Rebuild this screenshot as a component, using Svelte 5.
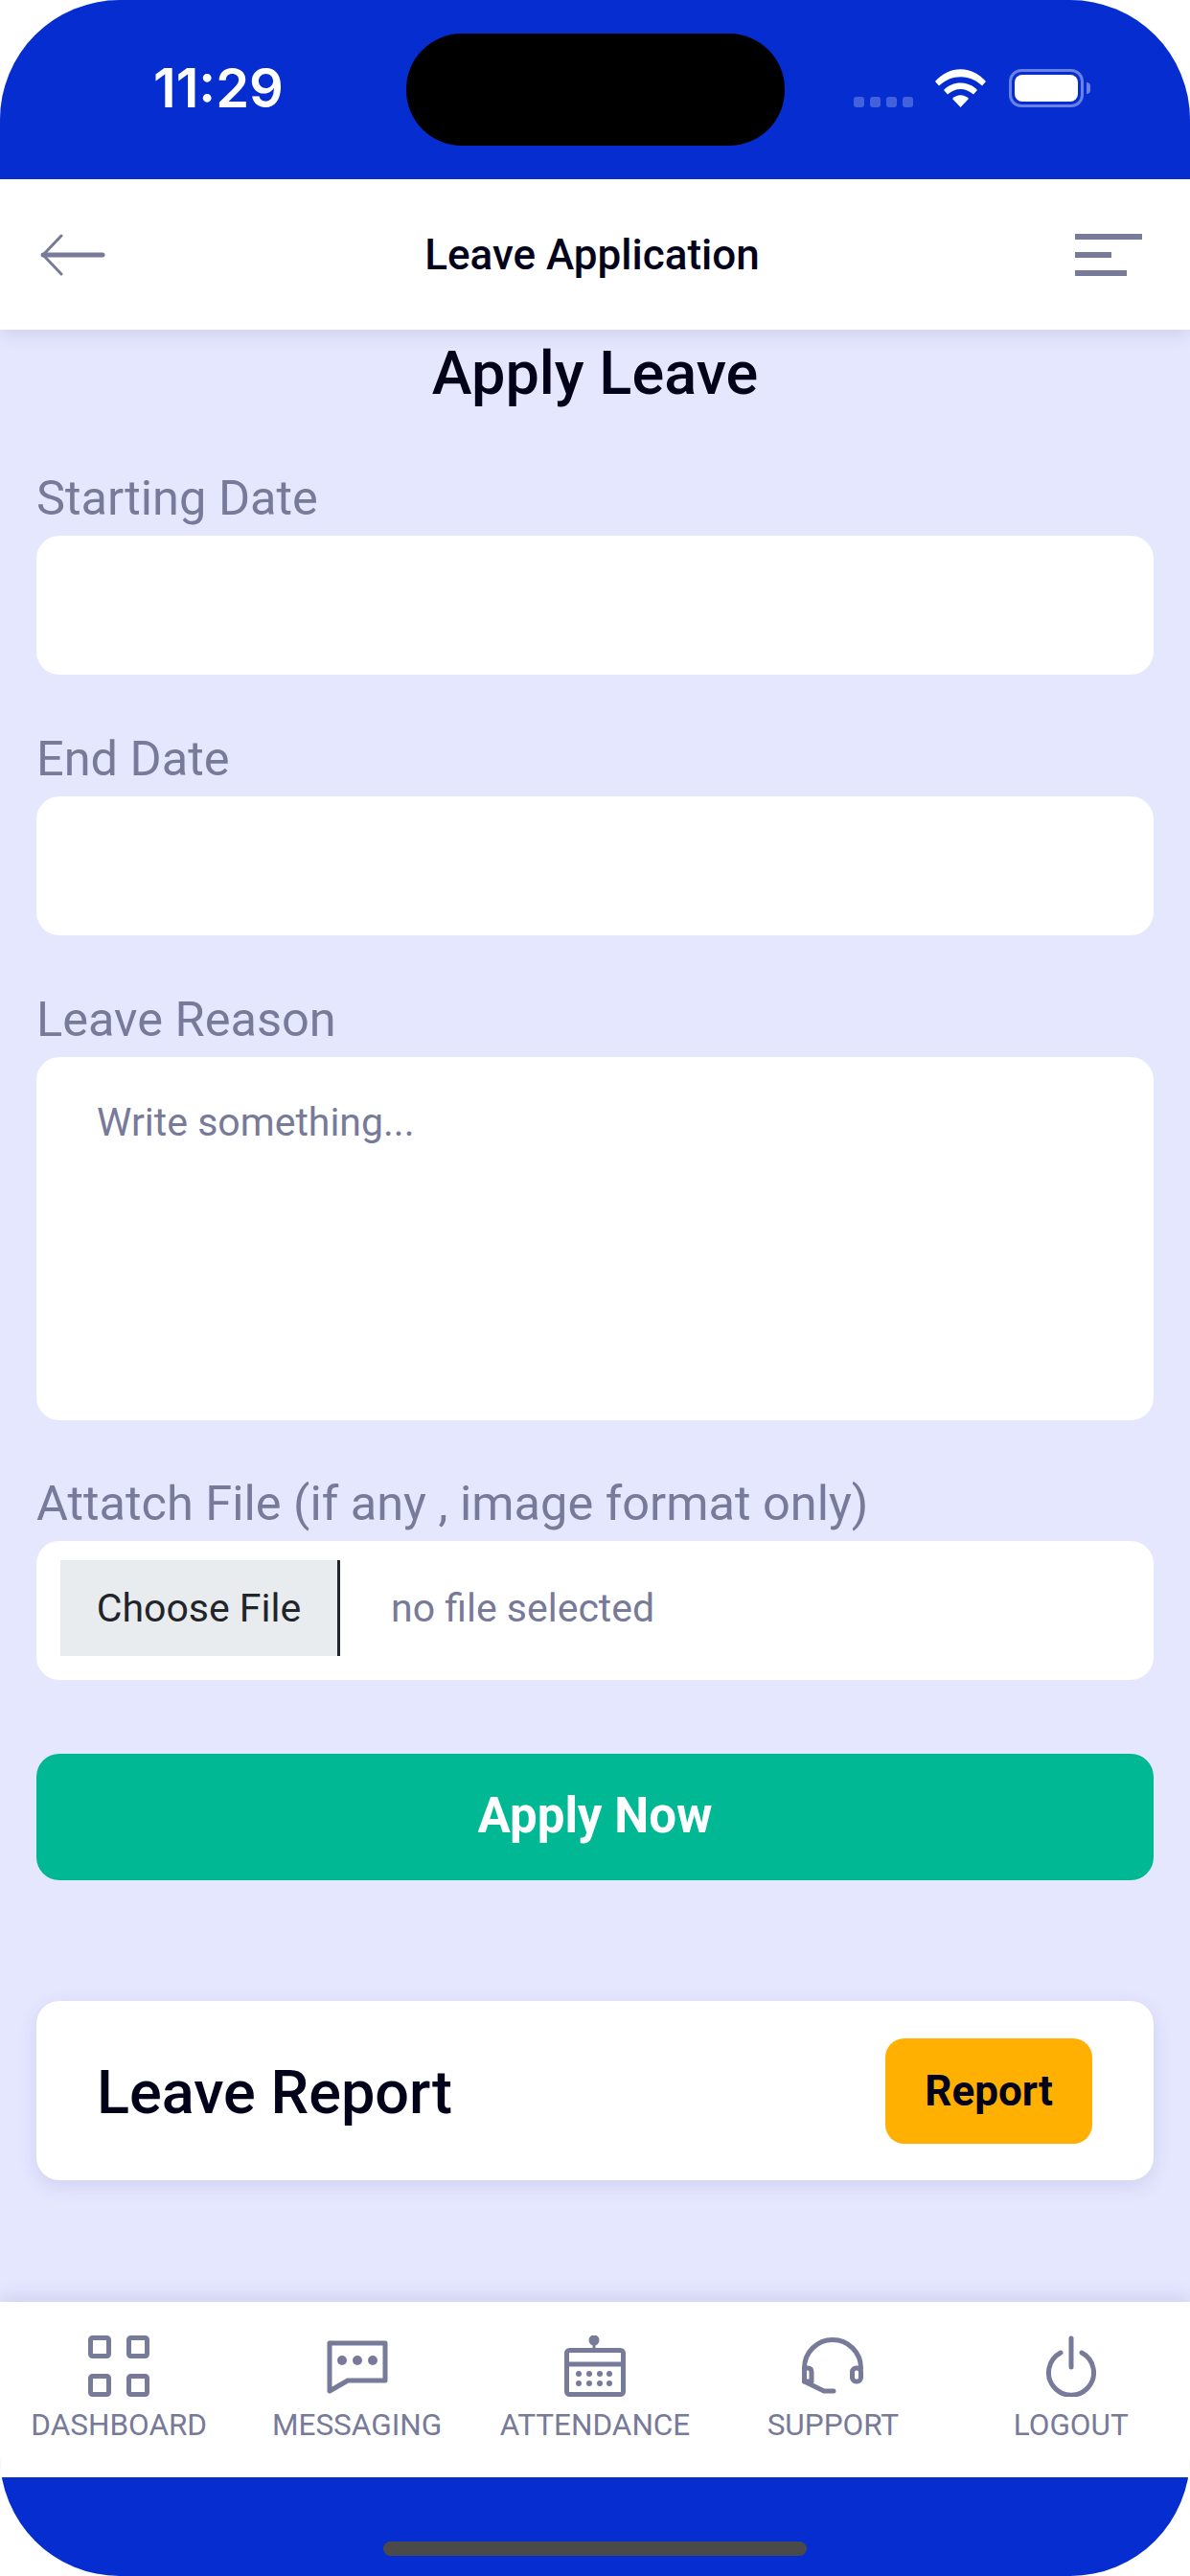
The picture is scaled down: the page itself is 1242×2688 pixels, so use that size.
<script>
	const navItems = ['DASHBOARD', 'MESSAGING', 'ATTENDANCE', 'SUPPORT', 'LOGOUT'];
	const calendarDots = [];
	for (const y of [40, 50]) {
		for (const x of [15, 26, 37, 47]) calendarDots.push({ x, y });
	}
</script>

<div class="phone">
	<div class="status">
		<span class="time">11:29</span>
		<div class="island"></div>
		<div class="signal">
			<i></i><i></i><i></i><i></i>
		</div>
		<svg class="wifi" width="53" height="40" viewBox="0 0 53 40" fill="#fff">
			<path d="M0 13 C15 -4 38 -4 53 13 L49 17.500 C36 5 17 5 4 17.500 Z" />
			<path d="M9 22 C18 12 35 12 44 22 L40 26.500 C32 19 21 19 13 26.500 Z" />
			<path d="M18 31 C23 26 30 26 35 31 L26.500 40 Z" />
		</svg>
		<div class="battery"><div class="battery-fill"></div></div>
		<div class="battery-tip"></div>
	</div>

	<header class="header">
		<svg class="back" width="68" height="44" viewBox="0 0 68 44" fill="none" stroke="#777a99" stroke-linecap="round" stroke-linejoin="round">
			<path d="M22 2 L3 22 L22 42" stroke-width="3" />
			<path d="M3 22 H65" stroke-width="5" />
		</svg>
		<h1>Leave Application</h1>
		<div class="menu">
			<span class="bar-a"></span>
			<span class="bar-b"></span>
			<span class="bar-c"></span>
		</div>
	</header>

	<main class="content">
		<h2>Apply Leave</h2>
		<label for="start">Starting Date</label>
		<input id="start" class="field" type="text" />
		<label for="end">End Date</label>
		<input id="end" class="field" type="text" />
		<label for="reason">Leave Reason</label>
		<textarea id="reason" class="area" placeholder="Write something..."></textarea>
		<label for="file">Attatch File (if any , image format only)</label>
		<div class="file">
			<button id="file" class="choose">Choose File</button>
			<span class="file-name">no file selected</span>
		</div>
		<button class="apply">Apply Now</button>
		<section class="report">
			<h3>Leave Report</h3>
			<button class="report-btn">Report</button>
		</section>
	</main>

	<nav class="nav">
		{#each navItems as item}
			<div class="nav-item">
				<div class="nav-icon">
					{#if item === 'DASHBOARD'}
						<svg width="64" height="64" viewBox="0 0 64 64" fill="none" stroke="#777a99" stroke-width="5">
							<rect x="2.500" y="2.500" width="19" height="19" rx="2" />
							<rect x="42.500" y="2.500" width="19" height="19" rx="2" />
							<rect x="2.500" y="42.500" width="19" height="19" rx="2" />
							<rect x="42.500" y="42.500" width="19" height="19" rx="2" />
						</svg>
					{:else if item === 'MESSAGING'}
						<svg width="64" height="64" viewBox="0 0 64 64" fill="none" stroke="#777a99" stroke-width="5" stroke-linejoin="round">
							<path d="M3 8 H61 V47 H22 L3 58 Z" />
							<circle cx="16" cy="26" r="5" fill="#777a99" stroke="none" />
							<circle cx="32" cy="26" r="5" fill="#777a99" stroke="none" />
							<circle cx="48" cy="26" r="5" fill="#777a99" stroke="none" />
						</svg>
					{:else if item === 'ATTENDANCE'}
						<svg width="64" height="64" viewBox="0 0 64 64" fill="none" stroke="#777a99" stroke-width="5" stroke-linejoin="round">
							<rect x="2.500" y="15.500" width="59" height="46" rx="3" />
							<path d="M2.500 30 H61.500" />
							<path d="M31 5 V15" stroke-width="3" />
							<circle cx="31" cy="5" r="5.500" fill="#777a99" stroke="none" />
							{#each calendarDots as dot}
								<circle cx={dot.x} cy={dot.y} r="3" fill="#777a99" stroke="none" />
							{/each}
						</svg>
					{:else if item === 'SUPPORT'}
						<svg width="64" height="64" viewBox="0 0 64 64" fill="none" stroke="#777a99" stroke-width="5" stroke-linecap="round" stroke-linejoin="round">
							<path d="M2.500 34 A29.500 29.500 0 0 1 61.500 34" />
							<path d="M2.500 34 V48 L23 58 H33" />
							<path d="M2.500 34 H6 Q10 34 10 38 V48 H2.500" />
							<rect x="52.500" y="34" width="9" height="14" rx="4" />
						</svg>
					{:else}
						<svg width="52" height="64" viewBox="0 0 52 64" fill="none" stroke="#777a99" stroke-width="5" stroke-linecap="round">
							<path d="M26 3 V33" />
							<path d="M15 18 A23.500 23.500 0 1 0 37 18" />
						</svg>
					{/if}
				</div>
				<span class="nav-label">{item}</span>
			</div>
		{/each}
	</nav>

	<div class="home-bar">
		<div class="indicator"></div>
	</div>
</div>

<style>
	:global(body) {
		margin: 0;
		background: #fff;
	}

	.phone {
		width: 1242px;
		height: 2688px;
		display: flex;
		flex-direction: column;
		overflow: hidden;
		border-radius: 125px;
		background: #e5e7ff;
		font-family: Roboto, 'Liberation Sans', sans-serif;
		color: #777a99;
	}

	.status {
		position: relative;
		height: 187px;
		flex: none;
		background: #052dd0;
		z-index: 3;
	}

	.time {
		position: absolute;
		left: 160px;
		top: 60px;
		font-family: Inter, sans-serif;
		font-size: 56px;
		line-height: 64px;
		font-weight: 600;
		color: #fff;
	}

	.island {
		position: absolute;
		left: 424px;
		top: 35px;
		width: 395px;
		height: 117px;
		border-radius: 58px;
		background: #000;
	}

	.signal {
		position: absolute;
		left: 891px;
		top: 101px;
		display: flex;
		gap: 6px;
	}

	.signal i {
		width: 11px;
		height: 11px;
		border-radius: 3px;
		background: rgba(255, 255, 255, 0.25);
	}

	.wifi {
		position: absolute;
		left: 976px;
		top: 72px;
	}

	.battery {
		position: absolute;
		left: 1053px;
		top: 72px;
		width: 78px;
		height: 40px;
		box-sizing: border-box;
		padding: 3px;
		border: 3px solid rgba(255, 255, 255, 0.4);
		border-radius: 13px;
	}

	.battery-fill {
		width: 100%;
		height: 100%;
		border-radius: 8px;
		background: #fff;
	}

	.battery-tip {
		position: absolute;
		left: 1134px;
		top: 86px;
		width: 4px;
		height: 12px;
		border-radius: 0 6px 6px 0;
		background: rgba(255, 255, 255, 0.4);
	}

	.header {
		position: relative;
		z-index: 2;
		height: 157px;
		flex: none;
		display: flex;
		align-items: center;
		justify-content: space-between;
		padding: 0 50px 0 42px;
		background: #fff;
		box-shadow: 0 4px 18px rgba(60, 60, 120, 0.14);
	}

	.header h1 {
		position: absolute;
		left: 0;
		right: 6px;
		margin: 0;
		text-align: center;
		font-size: 44px;
		font-weight: 500;
		color: #02021a;
	}

	.menu {
		width: 70px;
		display: flex;
		flex-direction: column;
		gap: 13px;
	}

	.menu span {
		height: 6px;
		background: #777a99;
	}

	.bar-b {
		width: 38px;
	}

	.bar-c {
		width: 54px;
	}

	.content {
		flex: 1;
		display: flex;
		flex-direction: column;
		padding: 10px 38px 0;
	}

	h2 {
		margin: 0 0 64px;
		text-align: center;
		font-size: 63px;
		line-height: 72px;
		font-weight: 500;
		color: #02021a;
	}

	label {
		font-size: 50.500px;
		line-height: 60px;
		margin-bottom: 9px;
	}

	.field,
	.area {
		display: block;
		flex: none;
		box-sizing: border-box;
		width: 100%;
		border: none;
		border-radius: 24px;
		background: #fff;
		font-family: inherit;
		outline: none;
	}

	.field {
		height: 145px;
		margin-bottom: 58px;
	}

	.area {
		height: 379px;
		margin-bottom: 57px;
		padding: 44px 63px;
		font-size: 41px;
		line-height: 48px;
		resize: none;
	}

	.area::placeholder {
		color: #777a99;
		opacity: 1;
	}

	.file {
		height: 145px;
		flex: none;
		box-sizing: border-box;
		display: flex;
		align-items: center;
		padding: 0 0 6px 25px;
		border-radius: 24px;
		background: #fff;
	}

	.choose {
		width: 292px;
		height: 100px;
		border: none;
		border-right: 3px solid #212529;
		background: #e9ecef;
		color: #212529;
		font-family: inherit;
		font-size: 41px;
	}

	.file-name {
		margin-left: 53px;
		font-size: 41px;
	}

	.apply {
		flex: none;
		height: 132px;
		margin-top: 77px;
		padding-bottom: 4px;
		border: none;
		border-radius: 24px;
		background: #00b894;
		color: #fff;
		font-family: inherit;
		font-size: 51px;
		font-weight: 700;
	}

	.report {
		flex: none;
		height: 187px;
		box-sizing: border-box;
		margin-top: 126px;
		padding: 0 64px 0 63px;
		display: flex;
		align-items: center;
		justify-content: space-between;
		border-radius: 24px;
		background: #fff;
		box-shadow: 0 6px 20px rgba(60, 60, 120, 0.12);
	}

	.report h3 {
		margin: 3px 0 0;
		font-size: 63px;
		font-weight: 500;
		color: #02021a;
	}

	.report-btn {
		width: 216px;
		height: 110px;
		border: none;
		border-radius: 20px;
		background: #ffb000;
		color: #02021a;
		font-family: inherit;
		font-size: 44px;
		font-weight: 700;
	}

	.nav {
		flex: none;
		height: 183px;
		display: grid;
		grid-template-columns: repeat(5, 1fr);
		background: #fff;
		box-shadow: 0 -4px 18px rgba(60, 60, 120, 0.14);
		z-index: 2;
	}

	.nav-item {
		display: flex;
		flex-direction: column;
		align-items: center;
		padding-top: 35px;
	}

	.nav-icon {
		height: 64px;
	}

	.nav-label {
		margin-top: 11px;
		font-size: 31.500px;
		line-height: 38px;
	}

	.home-bar {
		flex: none;
		height: 103px;
		box-sizing: border-box;
		padding-top: 67px;
		background: #052dd0;
		z-index: 3;
	}

	.indicator {
		width: 442px;
		height: 15px;
		margin-left: 400px;
		border-radius: 8px;
		background: #4a4a4a;
	}
</style>
